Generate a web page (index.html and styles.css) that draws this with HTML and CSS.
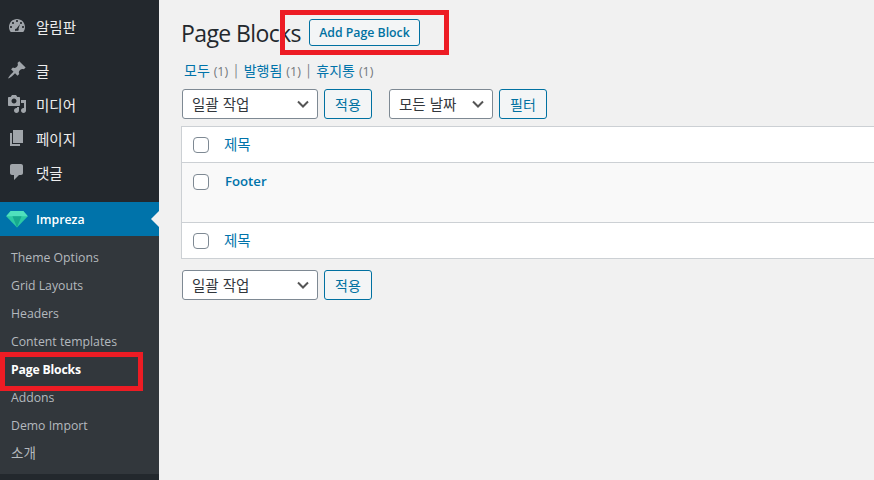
FILE: index.html
```html
<!DOCTYPE html>
<html lang="ko">
<head>
  <meta charset="UTF-8" />
  <title>Page Blocks</title>
  <link rel="stylesheet" href="styles.css">
</head>
<body>
  <div class="admin">
    <nav class="sidebar">
      <ul class="menu menu-top">
        <li class="menu-item">
          <svg class="menu-icon" viewBox="0 0 20 20"><path fill-rule="evenodd" d="M3.760 16h12.480c1.100-1.370 1.760-3.110 1.760-5 0-4.420-3.580-8-8-8s-8 3.580-8 8c0 1.890.66 3.630 1.760 5zM10 4c.55 0 1 .45 1 1s-.45 1-1 1-1-.45-1-1 .45-1 1-1zM6 6c.55 0 1 .45 1 1s-.45 1-1 1-1-.45-1-1 .45-1 1-1zm8 0c.55 0 1 .45 1 1s-.45 1-1 1-1-.45-1-1 .45-1 1-1zm-5.370 9.350s-.67-.59-.67-1.350c0-.69.56-1.250 1.250-1.250.07 0 .14.01.21.02L13 8l-1.500 4.700c.12.2.19.43.19.68 0 .76-.67 1.350-.67 1.350H8.630zM4 10c.55 0 1 .45 1 1s-.45 1-1 1-1-.45-1-1 .45-1 1-1zm12 0c.55 0 1 .45 1 1s-.45 1-1 1-1-.45-1-1 .45-1 1-1z"/></svg>
          <span>알림판</span>
        </li>
      </ul>
      <ul class="menu menu-content">
        <li class="menu-item">
          <svg class="menu-icon" viewBox="0 0 20 20"><path d="M10.440 3.020l1.820-1.820 6.360 6.350-1.830 1.820c-1.050-.68-2.480-.57-3.410.36l-.75.75c-.92.93-1.040 2.350-.35 3.410l-1.830 1.820-2.410-2.410-2.800 2.790c-.42.42-3.380 2.710-3.800 2.290s1.860-3.390 2.280-3.810l2.790-2.790L4.100 9.360l1.830-1.820c1.050.69 2.480.57 3.400-.36l.75-.75c.93-.92 1.050-2.350.36-3.410z"/></svg>
          <span>글</span>
        </li>
        <li class="menu-item">
          <svg class="menu-icon" viewBox="0 0 20 20"><path fill-rule="evenodd" d="M13 11V4c0-.55-.45-1-1-1h-1.670L9 1H5L3.670 3H2c-.55 0-1 .45-1 1v7c0 .55.45 1 1 1h10c.55 0 1-.45 1-1zM7 4.500c1.380 0 2.500 1.120 2.500 2.500S8.380 9.500 7 9.500 4.500 8.380 4.500 7 5.620 4.500 7 4.500zM14 6h5v10.500c0 1.380-1.120 2.500-2.500 2.500S14 17.880 14 16.500s1.120-2.500 2.500-2.500c.17 0 .34.02.5.05V9h-3V6zm-4 8.050V13h2v3.500c0 1.380-1.120 2.500-2.500 2.500S7 17.880 7 16.500 8.120 14 9.500 14c.17 0 .34.02.5.05z"/></svg>
          <span>미디어</span>
        </li>
        <li class="menu-item">
          <svg class="menu-icon" viewBox="0 0 20 20"><path d="M6 15V2h10v13H6zm-1 1h8v2H3V5h2v11z"/></svg>
          <span>페이지</span>
        </li>
        <li class="menu-item">
          <svg class="menu-icon" viewBox="0 0 20 20"><path d="M5 2h9c1.100 0 2 .9 2 2v7c0 1.100-.9 2-2 2h-2l-5 5v-5H5c-1.100 0-2-.9-2-2V4c0-1.100.9-2 2-2z"/></svg>
          <span>댓글</span>
        </li>
      </ul>
      <div class="menu-item menu-current">
        <svg class="gem" viewBox="0 0 24 20">
          <path d="M5 1h14l5 6-12 12.500L0 7z" fill="#2cc9a4"/>
          <path d="M5 1h14l5 6H0z" fill="#4fe0bd"/>
          <path d="M7 7h10l-5 12.500z" fill="#17a98f"/>
        </svg>
        <span>Impreza</span>
      </div>
      <ul class="submenu">
        <li>Theme Options</li>
        <li>Grid Layouts</li>
        <li>Headers</li>
        <li>Content templates</li>
        <li class="submenu-current">Page Blocks</li>
        <li>Addons</li>
        <li>Demo Import</li>
        <li class="submenu-ko">소개</li>
      </ul>
      <div class="highlight highlight-side"></div>
    </nav>

    <main class="content">
      <div class="page-head">
        <h1>Page Blocks</h1>
        <a class="btn btn-add">Add Page Block</a>
      </div>
      <ul class="subsubsub">
        <li><a>모두</a> <span class="count">(1)</span></li>
        <li class="sep">|</li>
        <li><a>발행됨</a> <span class="count">(1)</span></li>
        <li class="sep">|</li>
        <li><a>휴지통</a> <span class="count">(1)</span></li>
      </ul>
      <div class="tablenav">
        <div class="select select-bulk"><span>일괄 작업</span><svg class="chevron" viewBox="0 0 12 8"><path d="M1 1.500l5 5 5-5"/></svg></div>
        <a class="btn">적용</a>
        <div class="select select-date"><span>모든 날짜</span><svg class="chevron" viewBox="0 0 12 8"><path d="M1 1.500l5 5 5-5"/></svg></div>
        <a class="btn">필터</a>
      </div>
      <div class="list-table">
        <div class="row row-head"><span class="check"></span><a>제목</a></div>
        <div class="row row-post"><span class="check"></span><a class="post-title">Footer</a></div>
        <div class="row row-foot"><span class="check"></span><a>제목</a></div>
      </div>
      <div class="tablenav tablenav-bottom">
        <div class="select select-bulk"><span>일괄 작업</span><svg class="chevron" viewBox="0 0 12 8"><path d="M1 1.500l5 5 5-5"/></svg></div>
        <a class="btn">적용</a>
      </div>
      <div class="highlight highlight-add"></div>
    </main>
  </div>
</body>
</html>
```

FILE: styles.css
```css
* {
  box-sizing: border-box;
  margin: 0;
  padding: 0;
}

html, body {
  height: 480px;
  overflow: hidden;
}

body {
  font-family: "Open Sans", "Noto Sans CJK KR", sans-serif;
  font-size: 13px;
  color: #444;
  background: #f1f1f1;
}

ul {
  list-style: none;
}

a {
  color: #0073aa;
}

.admin {
  display: flex;
  height: 480px;
}

/* sidebar */
.sidebar {
  position: relative;
  width: 159px;
  flex-shrink: 0;
  background: #23282d;
  color: #eee;
}

.menu-top {
  padding-top: 9px;
}

.menu-content {
  padding-top: 10px;
  padding-bottom: 13px;
}

.menu-item {
  display: flex;
  align-items: center;
  height: 34px;
  font-family: "Noto Sans CJK KR", "Open Sans", sans-serif;
  font-size: 14.5px;
}

.menu-icon {
  width: 20px;
  height: 20px;
  margin: 0 9px 0 7px;
  fill: #a0a5aa;
  flex-shrink: 0;
}

.menu-current {
  position: relative;
  background: #0073aa;
  color: #fff;
  font-family: "Open Sans", sans-serif;
  font-weight: 600;
  font-size: 12.3px;
}

.menu-current::after {
  content: "";
  position: absolute;
  right: 0;
  top: 9px;
  border: 8px solid transparent;
  border-left: 0;
  border-right-color: #f1f1f1;
}

.gem {
  width: 22px;
  height: 18px;
  margin: 0 8px 0 6px;
  flex-shrink: 0;
}

.submenu {
  background: #32373c;
  padding: 8px 0 6px;
}

.submenu li {
  height: 28px;
  line-height: 28px;
  padding-left: 11px;
  font-size: 12.25px;
  color: #b4b9be;
  white-space: nowrap;
}

.submenu .submenu-current {
  color: #fff;
  font-weight: 700;
  letter-spacing: -0.2px;
}

.submenu .submenu-ko {
  font-family: "Noto Sans CJK KR", sans-serif;
  font-size: 13.5px;
  line-height: 24px;
}

/* red marks drawn over the screenshot */
.highlight {
  position: absolute;
  border: 5px solid #ed1c24;
}

.highlight-side {
  left: 0;
  top: 352px;
  width: 143px;
  height: 39px;
}

.highlight-add {
  left: 121px;
  top: 10px;
  width: 169px;
  height: 45px;
}

/* main */
.content {
  position: relative;
  flex: 1;
  overflow: hidden;
  padding: 19px 0 0 23px;
}

.page-head {
  display: flex;
  align-items: center;
  gap: 8px;
  height: 27px;
}

.page-head h1 {
  margin-left: -1px;
  font-size: 23px;
  font-weight: 400;
  letter-spacing: -0.6px;
  color: #23282d;
  white-space: nowrap;
}

.btn {
  display: flex;
  align-items: center;
  justify-content: center;
  width: 48px;
  height: 30px;
  border: 1px solid #0071a1;
  border-radius: 3px;
  background: #f3f5f6;
  color: #0071a1;
  font-family: "Noto Sans CJK KR", "Open Sans", sans-serif;
  font-size: 14px;
}

.btn-add {
  width: 111px;
  height: 27px;
  font-family: "Open Sans", sans-serif;
  font-weight: 600;
  font-size: 12.3px;
}

.subsubsub {
  display: flex;
  gap: 6px;
  margin-top: 14px;
  padding-left: 2px;
  height: 20px;
  line-height: 20px;
  font-size: 14px;
  font-family: "Noto Sans CJK KR", "Open Sans", sans-serif;
}

.count {
  color: #72777c;
  font-family: "Open Sans", sans-serif;
  font-size: 12.5px;
}

.sep {
  color: #72777c;
  font-size: 13px;
}

.tablenav {
  display: flex;
  gap: 6px;
  margin-top: 9px;
  height: 30px;
}

.select {
  display: flex;
  align-items: center;
  justify-content: space-between;
  height: 30px;
  padding: 0 8px 0 9px;
  border: 1px solid #7e8993;
  border-radius: 3px;
  background: #fff;
  color: #32373c;
  font-family: "Noto Sans CJK KR", "Open Sans", sans-serif;
  font-size: 14.5px;
}

.select span {
  padding-bottom: 2px;
}

.select-bulk {
  width: 136px;
}

.select-date {
  width: 104px;
  margin-left: 11px;
}

.chevron {
  width: 12px;
  height: 8px;
  fill: none;
  stroke: #555;
  stroke-width: 2;
}

.list-table {
  width: 760px;
  margin: 7px 0 0 -1px;
  border: 1px solid #ccd0d4;
  background: #fff;
}

.row {
  display: flex;
  align-items: center;
  height: 35px;
  padding-left: 11px;
  font-family: "Noto Sans CJK KR", "Open Sans", sans-serif;
  font-size: 14.5px;
}

.row a {
  margin-left: 7px;
  padding-bottom: 2px;
}

.row-post {
  align-items: flex-start;
  height: 61px;
  padding-top: 11px;
  background: #f9f9f9;
  border-top: 1px solid #ccd0d4;
  border-bottom: 1px solid #ccd0d4;
  font-family: "Open Sans", sans-serif;
}

.row .post-title {
  margin-left: 8px;
  margin-top: -1px;
  font-weight: 600;
  line-height: 16px;
  font-size: 13.2px;
}

.check {
  width: 16px;
  height: 16px;
  border: 1px solid #7e8993;
  border-radius: 4px;
  background: #fff;
  margin-right: 8px;
  flex-shrink: 0;
}

.tablenav-bottom {
  margin-top: 11px;
}
```
